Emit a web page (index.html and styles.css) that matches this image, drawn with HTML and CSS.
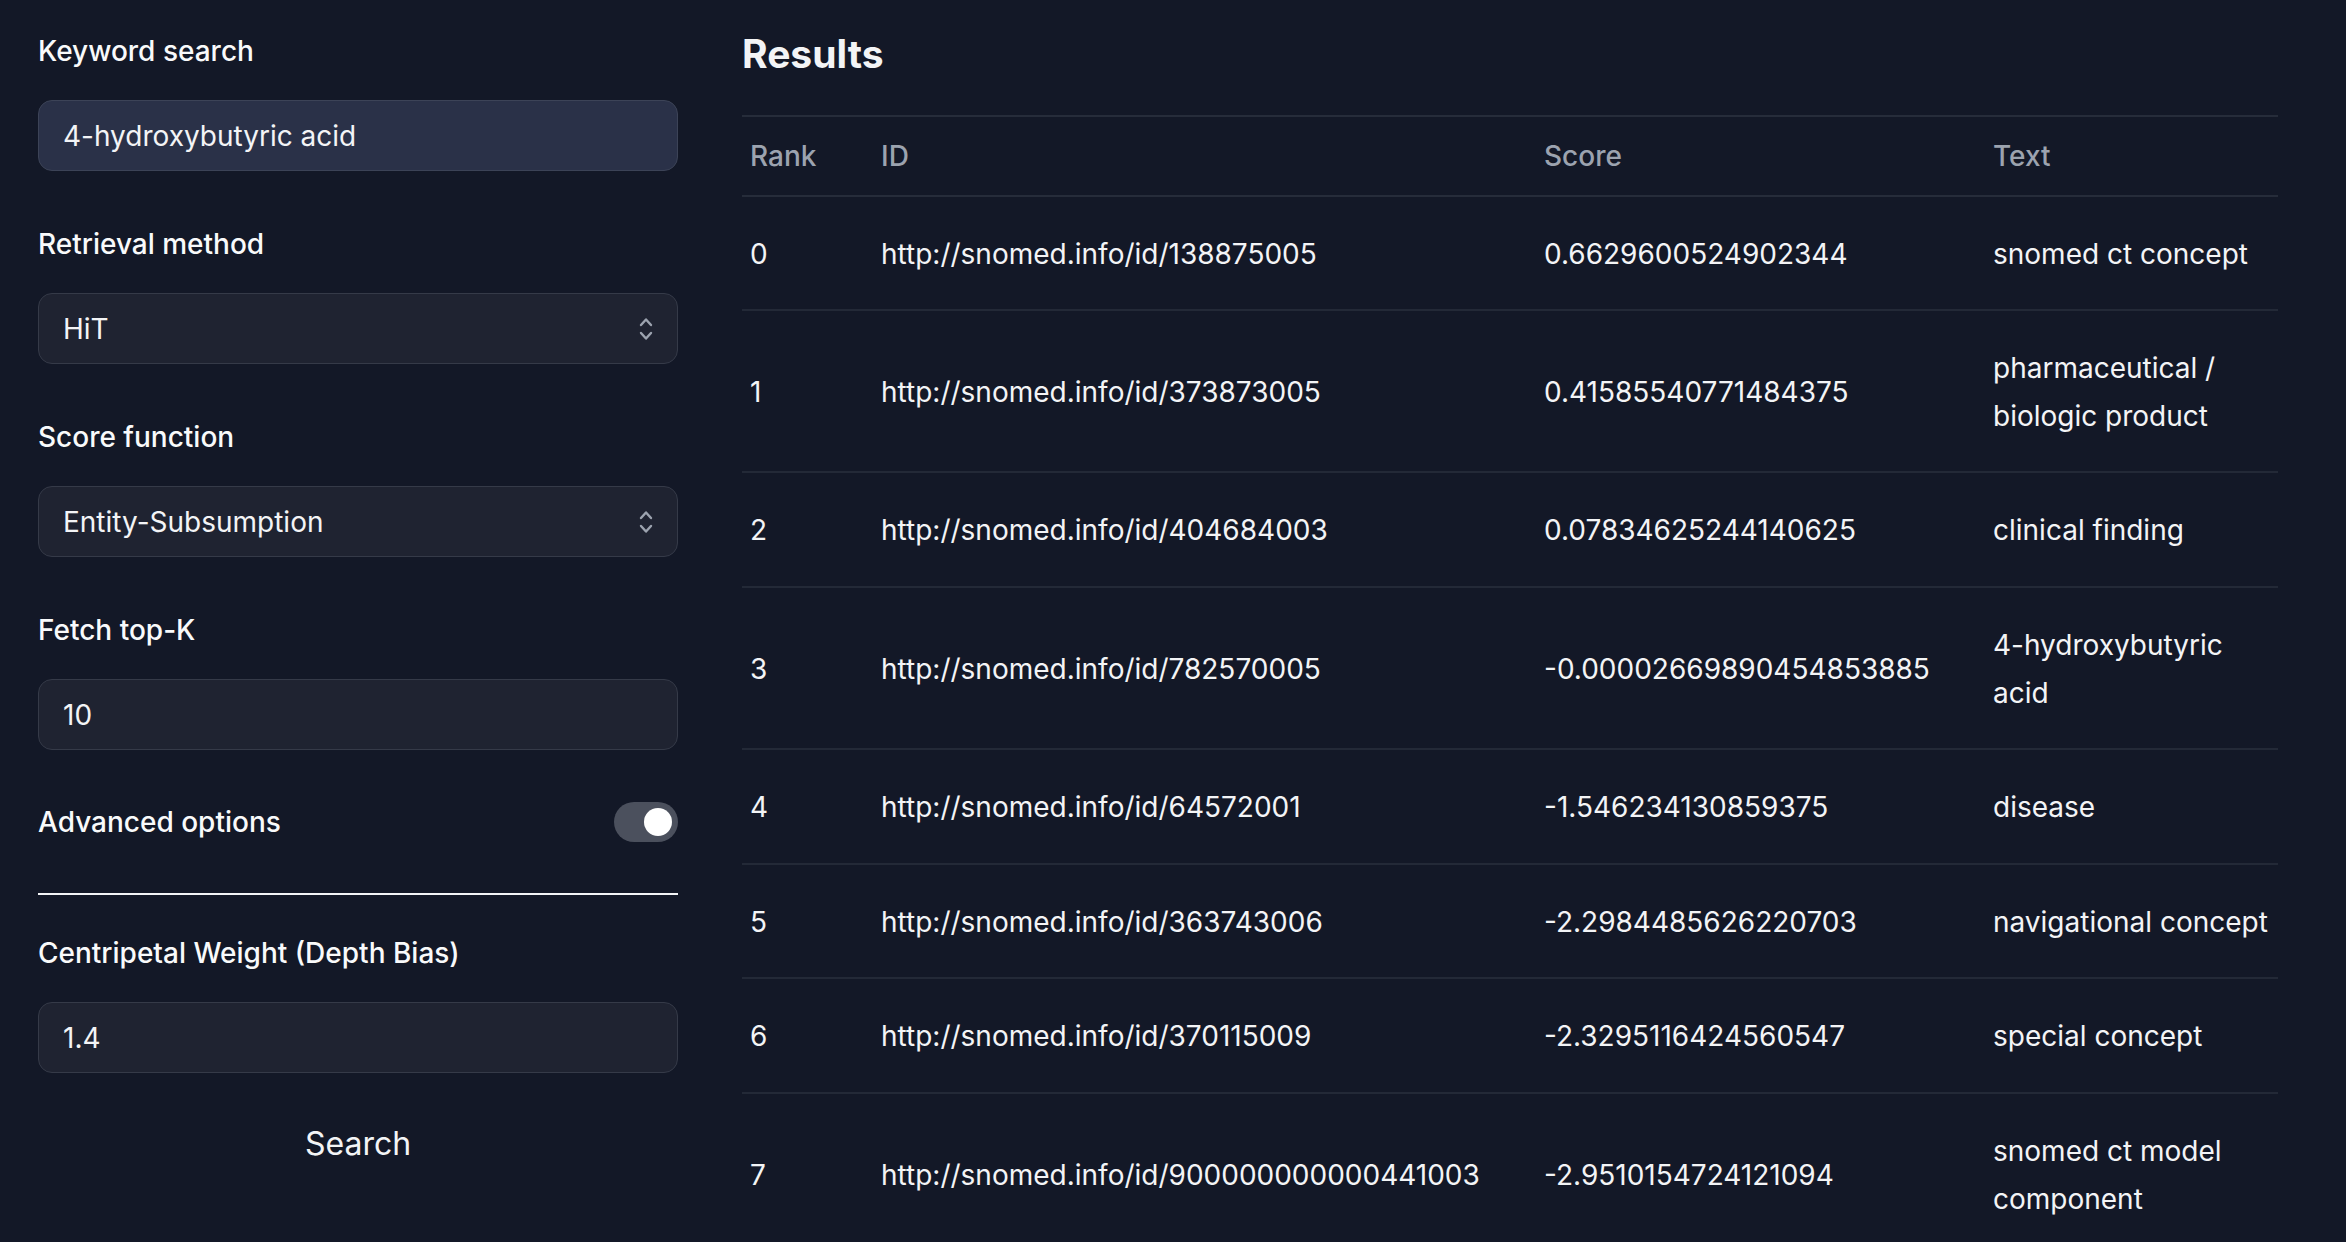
FILE: index.html
```html
<!DOCTYPE html>
<html lang="en">
<head>
<meta charset="utf-8">
<title>Search</title>
<link rel="stylesheet" href="styles.css">
</head>
<body>
<div class="page">
  <aside class="sidebar">
    <div class="field">
      <label class="field-label" for="kw">Keyword search</label>
      <input id="kw" class="control control-active" type="text" value="4-hydroxybutyric acid">
    </div>
    <div class="field">
      <label class="field-label" for="rm">Retrieval method</label>
      <div class="select-wrap">
        <select id="rm" class="control select"><option>HiT</option></select>
        <svg class="chevrons" width="14" height="26" viewBox="0 0 14 26"><polyline points="2,9 7,3.5 12,9"/><polyline points="2,17 7,22.5 12,17"/></svg>
      </div>
    </div>
    <div class="field">
      <label class="field-label" for="sf">Score function</label>
      <div class="select-wrap">
        <select id="sf" class="control select"><option>Entity-Subsumption</option></select>
        <svg class="chevrons" width="14" height="26" viewBox="0 0 14 26"><polyline points="2,9 7,3.5 12,9"/><polyline points="2,17 7,22.5 12,17"/></svg>
      </div>
    </div>
    <div class="field">
      <label class="field-label" for="tk">Fetch top-K</label>
      <input id="tk" class="control" type="text" value="10">
    </div>
    <div class="toggle-row">
      <span class="field-label">Advanced options</span>
      <span class="toggle"><span class="knob"></span></span>
    </div>
    <hr class="divider">
    <div class="field">
      <label class="field-label" for="cw">Centripetal Weight (Depth Bias)</label>
      <input id="cw" class="control" type="text" value="1.4">
    </div>
    <button class="search-btn" type="button">Search</button>
  </aside>
  <main class="results">
    <h2 class="results-title">Results</h2>
    <table class="results-table">
      <colgroup>
        <col class="col-rank">
        <col class="col-id">
        <col class="col-score">
        <col class="col-text">
      </colgroup>
      <thead>
        <tr><th>Rank</th><th>ID</th><th>Score</th><th>Text</th></tr>
      </thead>
      <tbody>
        <tr><td>0</td><td>http://snomed.info/id/138875005</td><td>0.6629600524902344</td><td>snomed ct concept</td></tr>
        <tr><td>1</td><td>http://snomed.info/id/373873005</td><td>0.41585540771484375</td><td>pharmaceutical / biologic product</td></tr>
        <tr><td>2</td><td>http://snomed.info/id/404684003</td><td>0.07834625244140625</td><td>clinical finding</td></tr>
        <tr><td>3</td><td>http://snomed.info/id/782570005</td><td>-0.00002669890454853885</td><td>4-hydroxybutyric acid</td></tr>
        <tr><td>4</td><td>http://snomed.info/id/64572001</td><td>-1.546234130859375</td><td>disease</td></tr>
        <tr><td>5</td><td>http://snomed.info/id/363743006</td><td>-2.2984485626220703</td><td>navigational concept</td></tr>
        <tr><td>6</td><td>http://snomed.info/id/370115009</td><td>-2.3295116424560547</td><td>special concept</td></tr>
        <tr><td>7</td><td>http://snomed.info/id/900000000000441003</td><td>-2.9510154724121094</td><td>snomed ct model component</td></tr>
      </tbody>
    </table>
  </main>
</div>
</body>
</html>
```

FILE: styles.css
```css
html, body {
  margin: 0;
  padding: 0;
}

body {
  background: #131827;
  color: #f3f4f6;
  font-family: Inter, "Noto Sans", "Liberation Sans", sans-serif;
  font-size: 28px;
}

.page {
  display: grid;
  grid-template-columns: 640px 1fr;
  column-gap: 64px;
  padding: 30px 68px 0 38px;
}

/* Sidebar */
.sidebar {
  display: flex;
  flex-direction: column;
}

.field {
  display: flex;
  flex-direction: column;
  margin-bottom: 52px;
}

.field-label {
  display: block;
  font-size: 28px;
  font-weight: 500;
  line-height: 42px;
  color: #f9fafb;
  margin-bottom: 28px;
}

.control {
  box-sizing: border-box;
  width: 100%;
  height: 71px;
  padding: 0 24px;
  border: 1.5px solid #353a48;
  border-radius: 14px;
  background: #1f2331;
  color: #f3f4f6;
  font-family: Inter, "Noto Sans", "Liberation Sans", sans-serif;
  font-size: 28px;
  line-height: 42px;
  outline: none;
  margin: 0;
}

.control-active {
  background: #2a3148;
  border-color: #3c4357;
}

.select-wrap {
  position: relative;
}

.select {
  appearance: none;
  -webkit-appearance: none;
  display: block;
  padding-right: 60px;
}

.chevrons {
  position: absolute;
  right: 25px;
  top: 50%;
  transform: translateY(-50%);
  pointer-events: none;
  fill: none;
  stroke: #9ca3af;
  stroke-width: 2.4;
  stroke-linecap: round;
  stroke-linejoin: round;
}

.toggle-row {
  display: flex;
  align-items: center;
  justify-content: space-between;
  height: 40px;
}

.toggle-row .field-label {
  margin-bottom: 0;
}

.toggle {
  box-sizing: border-box;
  display: flex;
  align-items: center;
  justify-content: flex-end;
  width: 64px;
  height: 40px;
  padding: 0 6px;
  border-radius: 20px;
  background: #4b505d;
}

.knob {
  width: 28px;
  height: 28px;
  border-radius: 50%;
  background: #ffffff;
}

.divider {
  border: 0;
  height: 2px;
  background: #f3f4f6;
  margin: 51px 0 37px;
}

.search-btn {
  align-self: stretch;
  background: transparent;
  border: 0;
  padding: 0;
  margin-top: -2px;
  color: #f3f4f6;
  font-family: Inter, "Noto Sans", "Liberation Sans", sans-serif;
  font-size: 32px;
  font-weight: 400;
  line-height: 42px;
  text-align: center;
  cursor: pointer;
}

/* Results */
.results {
  min-width: 0;
}

.results-title {
  margin: 0 0 38px;
  font-size: 39px;
  font-weight: 700;
  line-height: 47px;
  color: #f3f4f6;
}

.results-table {
  width: 100%;
  table-layout: fixed;
  border-collapse: collapse;
}

.col-rank { width: 131px; }
.col-id { width: 663px; }
.col-score { width: 449px; }
.col-text { width: 293px; }

.results-table th {
  text-align: left;
  font-weight: 500;
  color: #9ca3af;
  line-height: 47.6px;
  padding: 16px 8px 14px;
  border-top: 2px solid #262c3a;
  border-bottom: 2px solid #262c3a;
}

.results-table td {
  text-align: left;
  font-weight: 400;
  color: #f3f4f6;
  line-height: 47.6px;
  padding: 34px 8px 31px;
  border-bottom: 2px solid #232937;
  vertical-align: middle;
}
```
